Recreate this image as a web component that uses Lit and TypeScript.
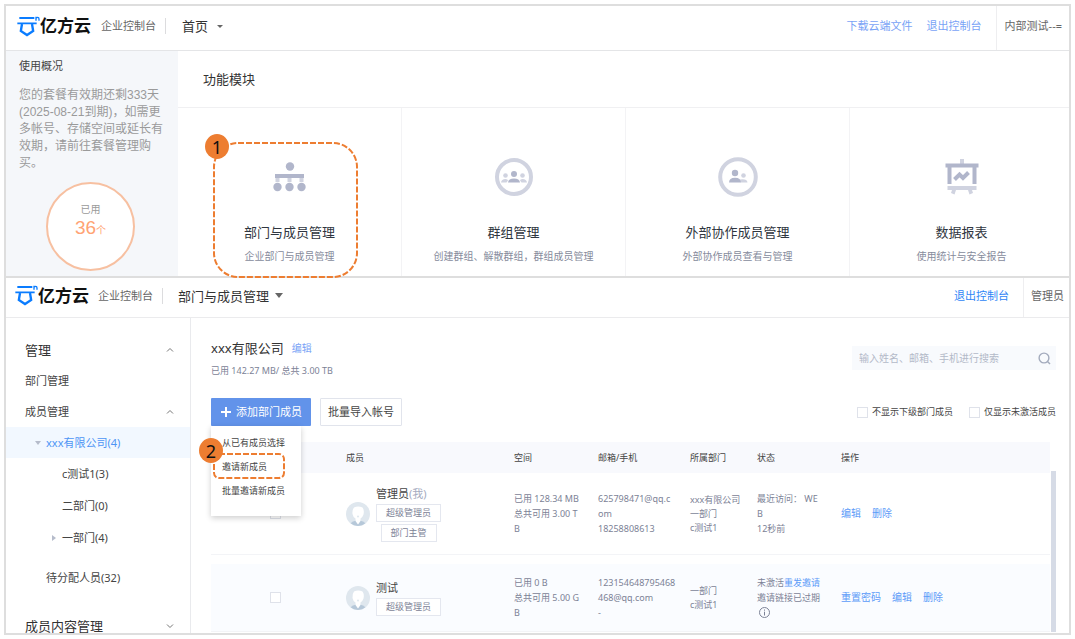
import { LitElement, html, css, svg, nothing } from "lit";
import { customElement, property } from "lit/decorators.js";

const controls = css`
  *, *::before, *::after { box-sizing: border-box; }
  a { text-decoration: none; }
  button, input { font: inherit; color: inherit; margin: 0; }
  button { background: none; border: 0; padding: 0; cursor: pointer; }
  h1, h2, h3, p, ul { margin: 0; padding: 0; font-weight: 400; list-style: none; }
  svg { display: block; }
`;

/* ---------- header bar ---------- */
@customElement("console-header")
class ConsoleHeader extends LitElement {
  @property() page = "";
  @property() account = "";
  @property({ type: Array }) links: string[] = [];
  @property({ type: Boolean }) compact = false;

  static styles = [controls, css`
    :host { display: block; }
    .bar { display: flex; height: 45px; padding-left: 11px; border-bottom: 1px solid #e4e5e7; color: #666; font-size: 11px; }
    .bar.compact { height: 40px; padding-left: 9px; border-color: #ebebed; }
    .left, .links, .account { display: flex; align-items: center; padding-bottom: 4px; white-space: nowrap; }
    .logo { display: flex; align-items: center; font-size: 17px; font-weight: 700; line-height: 20px; color: #111; }
    .sub { margin-left: 10px; }
    .compact .sub { margin-left: 9px; }
    .rule { width: 1px; height: 16px; margin: 0 16px 0 9px; background: #dcdcde; }
    .compact .rule { margin-right: 15px; }
    .page { display: flex; align-items: center; gap: 9px; font-size: 13px; line-height: 20px; color: #333; }
    .compact .page { gap: 6px; }
    .caret { border: 3px solid transparent; border-top-color: #666; border-bottom: 0; }
    .compact .caret { border-width: 5px 4px 0; }
    .links { margin-left: auto; gap: 14px; padding-right: 14px; }
    .links a { color: #79a3f6; }
    .compact .links a { color: #2f86f6; }
    .account { border-left: 1px solid #eeeef0; padding-left: 8px; padding-right: 7px; }
    .compact .account { padding: 0 5px 4px 7px; }
  `];

  render() {
    return html`
      <header class="bar ${this.compact ? "compact" : ""}">
        <div class="left">
          <div class="logo">
            <svg width="23" height="21" viewBox="50 43 69 63" fill="none" stroke="#0a7cff" aria-hidden="true">
              <path d="M57 49H102M51 65H109" stroke-width="5.500"/>
              <path d="M65 67L61.500 88L80 100L98.500 88L95 67" stroke-width="7"/>
              <path d="M107 57V45M107 50Q109 47 112 47Q116 47 116 52V57" stroke-width="4"/>
            </svg>
            <span>亿方云</span>
          </div>
          <span class="sub">企业控制台</span>
          <span class="rule"></span>
          <button class="page" type="button"><span>${this.page}</span><span class="caret"></span></button>
        </div>
        <nav class="links">${this.links.map((l) => html`<a href="#">${l}</a>`)}</nav>
        <div class="account">${this.account}</div>
      </header>`;
  }
}

/* ---------- overview panel ---------- */
const orgIcon = svg`
  <g fill="#b1b6cb"><circle cx="19" cy="9.500" r="4.200"/><rect x="4" y="17" width="29" height="4"/>
  <circle cx="6.500" cy="30" r="4.200"/><circle cx="18.500" cy="30" r="4.200"/><circle cx="30.500" cy="30" r="4.200"/></g>
  <g fill="#d0d3e0"><rect x="4.500" y="21" width="4" height="4"/><rect x="16.500" y="21" width="4" height="4"/><rect x="28.500" y="21" width="4" height="4"/></g>`;

const groupIcon = svg`
  <circle cx="19" cy="20" r="17" fill="none" stroke="#d0d3e0" stroke-width="4"/>
  <g fill="#d0d3e0"><circle cx="10.500" cy="18.500" r="2.300"/><circle cx="27.500" cy="18.500" r="2.300"/>
  <path d="M6 25.500Q6.500 22 10.500 22Q13 22 13 23.500L11.500 25.500ZM32 25.500Q31.500 22 27.500 22Q25 22 25 23.500L26.500 25.500Z"/></g>
  <g fill="#b1b6cb"><circle cx="19" cy="17" r="3"/><path d="M13 25.500Q13.500 21.500 19 21.500Q24.500 21.500 25 25.500Z"/></g>`;

const outsideIcon = svg`
  <circle cx="19" cy="20" r="17.800" fill="none" stroke="#d0d3e0" stroke-width="4"/>
  <g fill="#d0d3e0"><circle cx="24.500" cy="18.500" r="2.300"/><path d="M21 22.500Q28 21.500 28.500 25.500H22Z"/></g>
  <g fill="#b1b6cb"><circle cx="16" cy="16" r="3.200"/><path d="M10 25.500Q10 20.800 16 20.800Q22 20.800 22 25.500Z"/></g>`;

const reportIcon = svg`
  <g fill="#d0d3e0"><rect x="17" y="2" width="4" height="5"/><rect x="4.500" y="29" width="29" height="4"/>
  <path d="M9 33H13L11.500 37.500L8 36ZM29 33H25L26.500 37.500L30 36Z"/></g>
  <path d="M2.500 6.500H35.500V10.500H33.500V27H29.500V10.500H8.500V27H4.500V10.500H2.500Z" fill="#b1b6cb"/>
  <path d="M11.500 22.500L16.500 17.500L20 21L25.500 15.500" fill="none" stroke="#b1b6cb" stroke-width="4"/>`;

const modules = [
  { icon: orgIcon, name: "部门与成员管理", desc: "企业部门与成员管理", step: true },
  { icon: groupIcon, name: "群组管理", desc: "创建群组、解散群组，群组成员管理" },
  { icon: outsideIcon, name: "外部协作成员管理", desc: "外部协作成员查看与管理" },
  { icon: reportIcon, name: "数据报表", desc: "使用统计与安全报告" },
];

const badge = css`
  .badge { position: absolute; display: grid; place-items: center; width: 24px; height: 25px; border-radius: 50%;
    background: #ed7d31; color: #111; font-size: 18px; line-height: 24px; }
  .dashes { position: absolute; fill: none; stroke: #ed7d31; stroke-width: 2px; overflow: visible; pointer-events: none; }
`;

@customElement("overview-panel")
class OverviewPanel extends LitElement {
  static styles = [controls, badge, css`
    :host { display: block; }
    .body { display: flex; overflow-x: clip; }
    .usage { flex: none; width: 172px; padding: 7px 13px 5px; background: #f5f7fa; color: #9a9a9a;
      font-family: "Liberation Sans", "Noto Sans CJK SC", sans-serif; }
    .usage h2 { font-size: 11px; line-height: 16px; color: #444; }
    .usage p { margin-top: 13px; font-size: 12px; line-height: 17px; }
    .ring { display: flex; flex-direction: column; align-items: center; width: 89px; height: 89px; margin: 10px 0 0 27px;
      padding-top: 19px; border: 2px solid #f7c0a1; border-radius: 50%; background: #fff; }
    .ring span { font-size: 10px; line-height: 14px; }
    .ring strong { font-size: 19px; font-weight: 400; line-height: 22px; color: #ffa374; }
    .ring small { font-size: 10px; }
    .main { flex: 1; min-width: 0; margin-right: -5px; }
    .main h2 { padding: 18px 25px; font-size: 13px; line-height: 20px; color: #333; border-bottom: 1px solid #f0f0f2; }
    .grid { display: grid; grid-template-columns: repeat(4, 1fr); }
    .card { position: relative; display: flex; flex-direction: column; align-items: center; padding: 49px 4px 11px;
      border-right: 1px solid #f3f3f5; white-space: nowrap; }
    .card h3 { margin-top: 25px; font-size: 13px; line-height: 20px; color: #2f3640; }
    .card p { margin-top: 6px; padding-bottom: 1px; font-size: 10px; line-height: 16px; color: #868b9c; }
    .badge { left: 27px; top: 26px; }
    .dashes { left: 36px; top: 35px; }
  `];

  render() {
    return html`
      <console-header page="首页" account="内部测试--=" .links=${["下载云端文件", "退出控制台"]}></console-header>
      <div class="body">
        <aside class="usage">
          <h2>使用概况</h2>
          <p>您的套餐有效期还剩333天(2025-08-21到期)，如需更多帐号、存储空间或延长有效期，请前往套餐管理购买。</p>
          <div class="ring"><span>已用</span><strong>36<small>个</small></strong></div>
        </aside>
        <section class="main">
          <h2>功能模块</h2>
          <div class="grid">
            ${modules.map((m) => html`
              <article class="card">
                <svg width="38" height="40" viewBox="0 0 38 40" overflow="visible" aria-hidden="true">${m.icon}</svg>
                <h3>${m.name}</h3>
                <p>${m.desc}</p>
                ${m.step ? html`
                  <svg class="dashes" width="144" height="135" aria-hidden="true">
                    <rect x="0" y="0" width="143" height="134" rx="24" stroke-dasharray="6 2"/>
                  </svg>
                  <span class="badge">1</span>` : nothing}
              </article>`)}
          </div>
        </section>
      </div>`;
  }
}

/* ---------- member management panel ---------- */
interface Member {
  name: string; me?: boolean; tags: string[]; space: string[]; contact: string[]; depts: string[];
  status: unknown[]; actions: string[];
}

const infoIcon = html`<svg class="info" width="11" height="11" viewBox="0 0 11 11" fill="none" stroke="#7c8296" role="img" aria-label="说明">
  <circle cx="5.500" cy="5.500" r="5"/><path d="M5.500 2.500V3.700M5.500 4.700V8.500"/></svg>`;

const members: Member[] = [
  { name: "管理员", me: true, tags: ["超级管理员", "部门主管"],
    space: ["已用 128.34 MB", "总共可用 3.00 T", "B"], contact: ["625798471@qq.c", "om", "18258808613"],
    depts: ["xxx有限公司", "一部门", "c测试1"], status: ["最近访问： WE", "B", "12秒前"], actions: ["编辑", "删除"] },
  { name: "测试", tags: ["超级管理员"],
    space: ["已用 0 B", "总共可用 5.00 G", "B"], contact: ["123154648795468", "468@qq.com", "-"],
    depts: ["一部门", "c测试1"], status: [html`未激活<a href="#">重发邀请</a>`, "邀请链接已过期", infoIcon],
    actions: ["重置密码", "编辑", "删除"] },
];

const chevron = (up: boolean) => html`<svg width="8" height="6" viewBox="0 0 8 6" fill="none" stroke="#777" stroke-width="1" aria-hidden="true">
  <path d="${up ? "M1 4.500L4 1.500L7 4.500" : "M1 1.500L4 4.500L7 1.500"}"/></svg>`;

@customElement("members-panel")
class MembersPanel extends LitElement {
  static styles = [controls, badge, css`
    :host { display: flex; flex-direction: column; }
    .body { flex: 1; display: flex; min-height: 0; }
    .side { flex: none; width: 185px; padding-top: 16px; border-right: 1px solid #e9eaed; font-size: 11px; color: #444; }
    .side a { display: flex; align-items: center; height: 31px; padding: 0 16px 0 19px; color: inherit; white-space: nowrap; }
    .side a svg { margin-left: auto; }
    .side .head { font-size: 13px; color: #333; }
    .side .current { padding-left: 29px; gap: 5px; background: #f2f8ff; color: #4e95f5; }
    .side .current::before { content: ""; border: 3px solid transparent; border-top: 4px solid #b6bccb; border-bottom: 0; }
    .side .child { height: 32px; padding-left: 56px; }
    .side .closed { padding-left: 46px; gap: 6px; }
    .side .closed::before { content: ""; border: 3px solid transparent; border-left: 4px solid #b6bccb; border-right: 0; }
    .side .pending { margin: 8px 0 17px; padding-left: 40px; }
    .main { flex: 1; min-width: 0; padding: 20px 13px 0 20px; }
    .top, .tools, .filters, .name, .title { display: flex; align-items: center; }
    .top, .tools { justify-content: space-between; }
    .title { gap: 8px; }
    .title h1 { font-size: 13px; line-height: 20px; color: #333; }
    .title a { font-size: 10px; color: #79a3f6; }
    .quota { margin-top: 6px; font-size: 9px; line-height: 14px; color: #7c8296; }
    .search { display: flex; align-items: center; width: 204px; height: 24px; padding: 0 5px 0 7px; background: #f8fafd; }
    .search input { flex: 1; min-width: 0; border: 0; padding: 0; outline: 0; background: none; font-size: 10px; line-height: 16px; }
    .search input::placeholder { color: #b3b9c8; opacity: 1; }
    .tools { margin: 20px 0 16px; }
    .buttons { display: flex; gap: 9px; position: relative; font-size: 11px; line-height: 16px; }
    .buttons .add { display: flex; align-items: center; gap: 5px; height: 28px; padding: 0 9px 0 10px; background: #6293ea; color: #fff; border-radius: 1px; }
    .buttons .import { height: 28px; padding: 0 7px; border: 1px solid #e1e4ec; border-radius: 1px; color: #444; }
    .menu { position: absolute; z-index: 2; left: 0; top: 28px; width: 90px; padding: 5px 0 13px; background: #fff; box-shadow: 0 2px 6px #0003; }
    .menu button { display: block; width: 100%; height: 24px; padding-left: 11px; font-size: 9px; text-align: left; color: #444; white-space: nowrap; }
    .menu .badge { left: -12px; top: 12px; }
    .menu .dashes { left: 3px; top: 28px; }
    .filters { gap: 16px; font-size: 9px; color: #444; }
    .filters label { display: flex; align-items: center; gap: 4px; }
    .tick { appearance: none; display: block; width: 11px; height: 11px; border: 1px solid #dfe2ea; background: #fff; }
    .list { display: flex; }
    table { flex: 1; width: 100%; table-layout: fixed; border-spacing: 0; font-size: 9px; line-height: 15px; color: #7c8296; }
    th, td { padding: 0; text-align: left; white-space: nowrap; }
    th { height: 31px; background: #f8f9fd; font-weight: 400; color: #444; }
    td { height: 82px; border-bottom: 1px solid #f3f4f7; }
    tr + tr td { height: 77px; border-top: 9px solid #fff; background: #fafcff; }
    .c-pick { width: 135px; } .c-member { width: 168px; } .c-space { width: 84px; }
    .c-contact { width: 92px; } .c-dept { width: 67px; } .c-status { width: 84px; }
    td .tick { margin-left: 59px; }
    td a { color: #5c9bf8; }
    .person { display: flex; align-items: center; gap: 6px; }
    .tags { display: flex; flex-direction: column; align-items: center; gap: 2px; }
    .name { align-self: flex-start; font-size: 11px; line-height: 16px; color: #444; }
    .name span { color: #a5abc0; }
    .tag { height: 18px; padding: 0 9px; border: 1px solid #e4e7ef; background: #fff; line-height: 16px; }
    .depts { line-height: 14px; }
    .info { margin: 2px; }
    .actions { display: flex; gap: 11px; font-size: 10px; }
    .scroll { flex: none; width: 5px; margin: 29px 0 0 1px; background: #d6dbe6; }
  `];

  render() {
    return html`
      <console-header compact page="部门与成员管理" account="管理员" .links=${["退出控制台"]}></console-header>
      <div class="body">
        <nav class="side">
          <a class="head" href="#">管理${chevron(true)}</a>
          <a href="#">部门管理</a>
          <a href="#">成员管理${chevron(true)}</a>
          <a class="current" href="#">xxx有限公司(4)</a>
          <a class="child" href="#">c测试1(3)</a>
          <a class="child" href="#">二部门(0)</a>
          <a class="child closed" href="#">一部门(4)</a>
          <a class="pending" href="#">待分配人员(32)</a>
          <a class="head" href="#">成员内容管理${chevron(false)}</a>
        </nav>
        <main class="main">
          <div class="top">
            <div>
              <div class="title"><h1>xxx有限公司</h1><a href="#">编辑</a></div>
              <p class="quota">已用 142.27 MB/ 总共 3.00 TB</p>
            </div>
            <label class="search">
              <input type="search" aria-label="搜索成员" placeholder="输入姓名、邮箱、手机进行搜索">
              <svg width="13" height="13" viewBox="0 0 13 13" fill="none" stroke="#a3abbd" stroke-width="1.400" aria-hidden="true">
                <circle cx="6" cy="6" r="4.900"/><path d="M9.500 9.500L12 12"/></svg>
            </label>
          </div>
          <div class="tools">
            <div class="buttons">
              <button class="add" type="button">
                <svg width="10" height="10" viewBox="0 0 10 10" stroke="#fff" stroke-width="2" aria-hidden="true"><path d="M5 0V10M0 5H10"/></svg>
                <span>添加部门成员</span>
              </button>
              <button class="import" type="button">批量导入帐号</button>
              <div class="menu">
                <button type="button">从已有成员选择</button>
                <button type="button">邀请新成员</button>
                <button type="button">批量邀请新成员</button>
                <svg class="dashes" width="71" height="24" aria-hidden="true">
                  <rect x="0" y="0" width="70" height="24" rx="5" stroke-dasharray="6 2"/>
                </svg>
                <span class="badge">2</span>
              </div>
            </div>
            <div class="filters">
              <label><input class="tick" type="checkbox">不显示下级部门成员</label>
              <label><input class="tick" type="checkbox">仅显示未激活成员</label>
            </div>
          </div>
          <div class="list">
            <table>
              <thead>
                <tr>
                  <th class="c-pick"></th><th class="c-member">成员</th><th class="c-space">空间</th>
                  <th class="c-contact">邮箱/手机</th><th class="c-dept">所属部门</th><th class="c-status">状态</th><th>操作</th>
                </tr>
              </thead>
              <tbody>${members.map((m) => this.row(m))}</tbody>
            </table>
            <div class="scroll"></div>
          </div>
        </main>
      </div>`;
  }

  private lines(items: unknown[]) {
    return items.map((i) => html`<div>${i}</div>`);
  }

  private row(m: Member) {
    return html`
      <tr>
        <td><input class="tick" type="checkbox" aria-label=${m.name}></td>
        <td>
          <div class="person">
            <svg width="24" height="24" viewBox="0 0 24 24" aria-hidden="true">
              <circle cx="12" cy="12" r="12" fill="#dfe7ee"/>
              <path d="M4.500 21.300Q7 19.200 10 18.500H14Q17 19.200 19.500 21.300A12 12 0 0 1 4.500 21.300Z" fill="#b6c8d9"/>
              <path d="M8 5.500Q12 3.500 16.500 5.500Q18.500 8 17.500 12.500Q16.500 15.500 14.500 16.500V19L12 22.500L9.500 19V16.500Q7 15 6.500 12Q6 8 8 5.500Z" fill="#fff"/>
              <circle cx="12" cy="14.500" r="1" fill="#dfe7ee"/>
            </svg>
            <div class="tags">
              <div class="name">${m.name}${m.me ? html`<span>(我)</span>` : nothing}</div>
              ${m.tags.map((t) => html`<span class="tag">${t}</span>`)}
            </div>
          </div>
        </td>
        <td>${this.lines(m.space)}</td>
        <td>${this.lines(m.contact)}</td>
        <td class="depts">${this.lines(m.depts)}</td>
        <td>${this.lines(m.status)}</td>
        <td><div class="actions">${m.actions.map((a) => html`<a href="#">${a}</a>`)}</div></td>
      </tr>`;
  }
}

/* ---------- page ---------- */
@customElement("app-root")
class AppRoot extends LitElement {
  static styles = css`
    :host { box-sizing: border-box; display: flex; flex-direction: column; height: 100vh; padding: 4px; overflow: hidden;
      background: #fff; font-family: "Noto Sans", "Noto Sans CJK SC", sans-serif; line-height: 16px; }
    .frame { border: 2px solid #dedede; background: #fff; }
    .upper { position: relative; z-index: 1; flex: none; }
    .lower { flex: 1; min-height: 0; margin-top: -2px; overflow: hidden; }
  `;

  render() {
    return html`
      <overview-panel class="frame upper"></overview-panel>
      <members-panel class="frame lower"></members-panel>`;
  }
}
